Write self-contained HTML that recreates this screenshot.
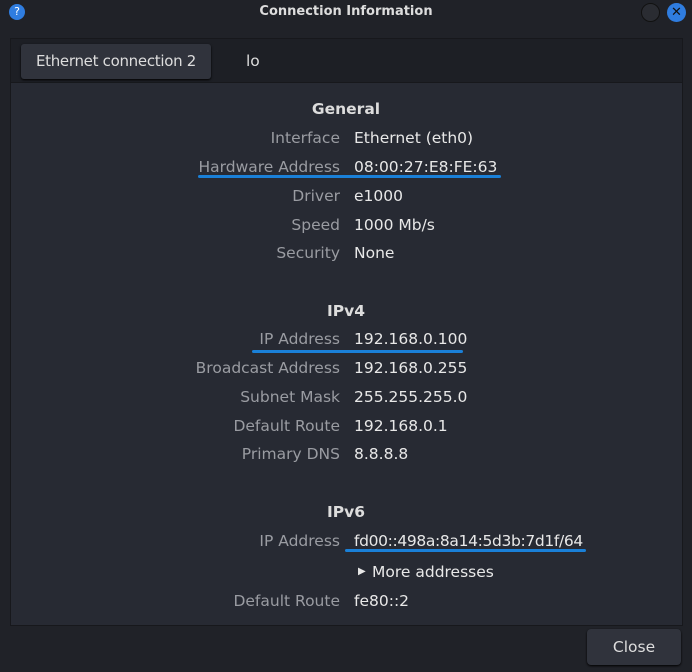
<!DOCTYPE html>
<html><head><style>
*{margin:0;padding:0;box-sizing:border-box}
body{width:692px;height:672px;background:#202228;font-family:"DejaVu Sans","Liberation Sans",sans-serif;color:#e6e6e6;position:relative;overflow:hidden;font-size:15.5px}
.title{position:absolute;top:4px;left:0;width:692px;text-align:center;font-size:13px;font-weight:bold;color:#ddd}
.help{position:absolute;left:9px;top:4px;width:16px;height:16px;border-radius:50%;background:#2f7de0;color:#fff;font-size:11px;text-align:center;line-height:16px}
.min{position:absolute;left:641px;top:3px;width:19px;height:19px;border-radius:50%;background:#2a2c32;border:1px solid #111}
.x{position:absolute;left:667px;top:3px;width:19px;height:19px;border-radius:50%;background:#2f7de0;color:#111;font-weight:bold;font-size:13px;text-align:center;line-height:19px}
.panel{position:absolute;left:10px;top:38px;width:673px;height:588px;background:#272a33;border:1px solid #17181c}
.tabs{position:absolute;left:0;top:0;width:671px;height:44px;background:#1d1f25;border-bottom:1px solid #17181c}
.tab{position:absolute;left:10px;top:5px;width:190px;height:35px;background:#30333c;border-radius:3px;box-shadow:0 1px 2px #000;text-align:center;line-height:35px;color:#ddd;font-size:15px;letter-spacing:-0.3px}
.lo{position:absolute;left:235px;top:5px;line-height:35px;color:#ddd}
.r{position:absolute;white-space:nowrap;line-height:20px;top:1px}
.l{right:352px;color:#9a9ca2}
.v{left:354px;color:#e8e8e8}
.h{left:0;width:692px;text-align:center;font-weight:bold;color:#ddd}
.u{position:absolute;height:3px;background:#1a80d8;border-radius:2px}
.close{position:absolute;left:587px;top:629px;width:94px;height:36px;background:#30333c;border-radius:4px;box-shadow:0 1px 2px #000;text-align:center;line-height:36px;color:#ddd}
</style></head><body>
<div class="help">?</div>
<div class="title">Connection Information</div>
<div class="min"></div><div class="x">✕</div>
<div class="panel"><div class="tabs"><div class="tab">Ethernet connection 2</div><div class="lo">lo</div></div></div>
<div class="r h" style="top:99px">General</div>
<div class="r l" style="top:128px">Interface</div><div class="r v" style="top:128px">Ethernet (eth0)</div>
<div class="r l" style="top:157px">Hardware Address</div><div class="r v" style="top:157px">08:00:27:E8:FE:63</div>
<div class="u" style="left:198px;top:175px;width:303px"></div>
<div class="r l" style="top:186px">Driver</div><div class="r v" style="top:186px">e1000</div>
<div class="r l" style="top:215px">Speed</div><div class="r v" style="top:215px">1000 Mb/s</div>
<div class="r l" style="top:243px">Security</div><div class="r v" style="top:243px">None</div>
<div class="r h" style="top:301px">IPv4</div>
<div class="r l" style="top:329px">IP Address</div><div class="r v" style="top:329px">192.168.0.100</div>
<div class="u" style="left:252px;top:350px;width:211px"></div>
<div class="r l" style="top:358px">Broadcast Address</div><div class="r v" style="top:358px">192.168.0.255</div>
<div class="r l" style="top:387px">Subnet Mask</div><div class="r v" style="top:387px">255.255.255.0</div>
<div class="r l" style="top:416px">Default Route</div><div class="r v" style="top:416px">192.168.0.1</div>
<div class="r l" style="top:444px">Primary DNS</div><div class="r v" style="top:444px">8.8.8.8</div>
<div class="r h" style="top:502px">IPv6</div>
<div class="r l" style="top:531px">IP Address</div><div class="r v" style="top:531px;letter-spacing:-0.35px">fd00::498a:8a14:5d3b:7d1f/64</div>
<div class="u" style="left:345px;top:549px;width:241px"></div>
<div class="r v" style="top:562px;left:358px;font-size:10px">▶</div>
<div class="r v" style="top:562px;left:372px">More addresses</div>
<div class="r l" style="top:591px">Default Route</div><div class="r v" style="top:591px">fe80::2</div>
<div class="close">Close</div>
</body></html>
